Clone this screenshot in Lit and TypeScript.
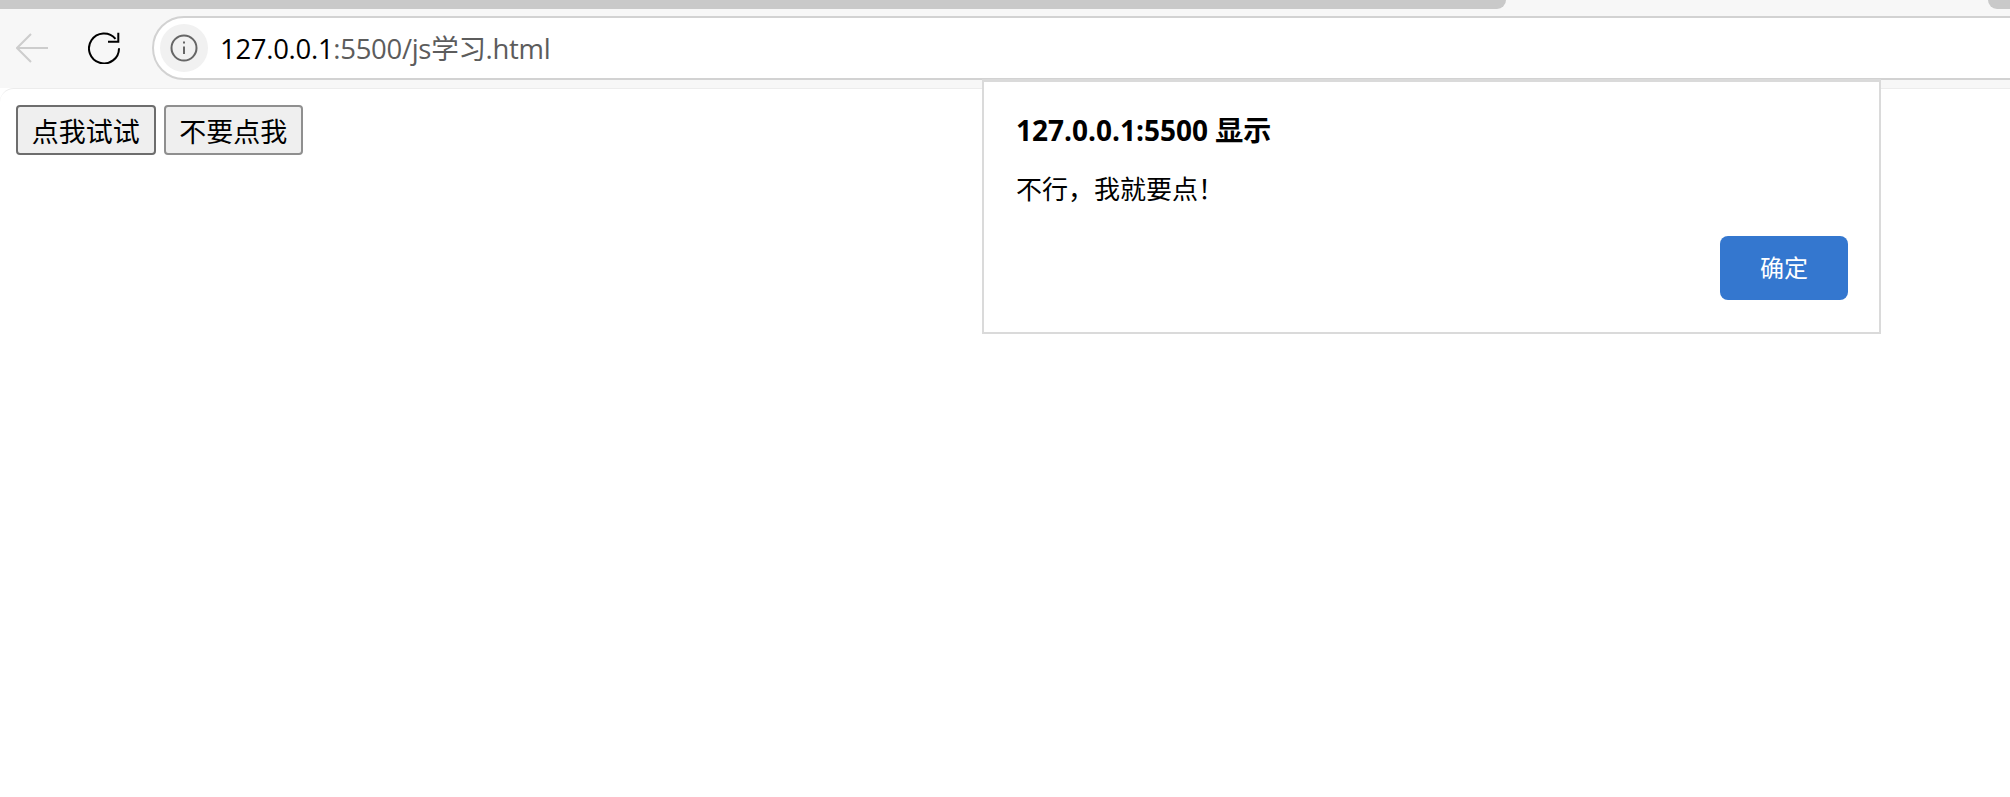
import { LitElement, html, css } from "lit";
import { customElement } from "lit/decorators.js";

@customElement("app-root")
export class AppRoot extends LitElement {
  static styles = css`
    :host {
      display: block;
      position: relative;
      height: 797px;
      overflow: hidden;
      background: #fff;
      font-family: "Open Sans", "Noto Sans CJK SC", sans-serif;
      color: #000;
    }
    .chrome {
      background: #f7f7f7;
      height: 88px;
      display: flex;
      flex-direction: column;
      overflow: hidden;
    }
    .tabs {
      height: 9px;
      flex: none;
      display: flex;
      justify-content: space-between;
    }
    .tab-a {
      width: 1506px;
      background: #c9c9c9;
      border-bottom-right-radius: 14px;
    }
    .tab-b {
      width: 22px;
      background: #c9c9c9;
      border-bottom-left-radius: 14px;
    }
    .toolbar {
      display: flex;
      align-items: flex-start;
      padding: 7px 0 0 16px;
    }
    .back {
      width: 32px;
      height: 32px;
      margin-top: 16px;
      display: block;
    }
    .reload {
      width: 32px;
      height: 32px;
      margin: 16px 0 0 40px;
      display: block;
    }
    .omnibox {
      flex: 1;
      height: 64px;
      box-sizing: border-box;
      margin: 0 -60px 0 32px;
      border: 2px solid #d2d2d2;
      border-radius: 32px;
      background: #fff;
      display: flex;
      align-items: center;
      padding-left: 6px;
    }
    .info {
      width: 48px;
      height: 48px;
      border-radius: 50%;
      background: #f1f1f1;
      display: flex;
      align-items: center;
      justify-content: center;
      flex: none;
    }
    .url {
      margin-left: 12px;
      font-size: 27.5px;
      letter-spacing: -0.3px;
      color: #5c5c5c;
      white-space: nowrap;
      position: relative;
      top: -1px;
    }
    .host {
      color: #000;
    }
    .content {
      background: #fff;
      border-top: 1px solid #ececec;
      border-top-left-radius: 14px;
      height: 709px;
      box-sizing: border-box;
      padding: 16px 16px;
      display: flex;
      gap: 8px;
      align-items: flex-start;
    }
    .btn {
      font-family: "Noto Sans CJK SC", sans-serif;
      font-size: 27px;
      line-height: 1;
      height: 50px;
      width: 139.5px;
      box-sizing: border-box;
      padding: 0;
      background: #efefef;
      border: 2px solid #8f8f8f;
      border-radius: 4px;
      color: #000;
    }
    .btn.focus {
      border-color: #6d6d6d;
    }
    .dialog {
      position: absolute;
      left: 982px;
      top: 79px;
      width: 899px;
      height: 255px;
      box-sizing: border-box;
      background: #fff;
      border: 2px solid #dadada;
      border-top-width: 3px;
      padding: 30px 31px 0 32px;
    }
    .title {
      font-size: 28px;
      line-height: 36px;
      font-weight: 700;
      white-space: nowrap;
    }
    .msg {
      font-size: 26px;
      line-height: 36px;
      margin-top: 22px;
      font-family: "Noto Sans CJK SC", sans-serif;
    }
    .actions {
      display: flex;
      justify-content: flex-end;
      margin-top: 30px;
    }
    .ok {
      width: 128px;
      height: 64px;
      background: #3477cf;
      color: #fff;
      border: none;
      border-radius: 8px;
      font-family: "Noto Sans CJK SC", sans-serif;
      font-size: 24px;
      padding: 0 0 3px;
    }
  `;

  render() {
    return html`
      <div class="chrome">
        <div class="tabs"><div class="tab-a"></div><div class="tab-b"></div></div>
        <div class="toolbar">
          <svg class="back" viewBox="0 0 32 32" fill="none" stroke="#cdcdcd" stroke-width="2">
            <path d="M0.5 16H32M15 2L1 16L15 30" />
          </svg>
          <svg class="reload" viewBox="0 0 32 32" fill="none" stroke="#000" stroke-width="2">
            <path d="M31 16.3A15 15 0 1 1 27.5 6.8" />
            <path d="M30.3 0.7V9.7H20" />
          </svg>
          <div class="omnibox">
            <div class="info">
              <svg width="28" height="28" viewBox="0 0 28 28" fill="none" stroke="#666" stroke-width="2">
                <circle cx="14" cy="14" r="12.5" />
                <path d="M14 12.5V20" />
                <path d="M14 7.5V9.5" />
              </svg>
            </div>
            <div class="url"><span class="host">127.0.0.1</span>:5500/js学习.html</div>
          </div>
        </div>
      </div>
      <div class="content">
        <button class="btn focus">点我试试</button>
        <button class="btn">不要点我</button>
      </div>
      <div class="dialog">
        <div class="title">127.0.0.1:5500 显示</div>
        <div class="msg">不行，我就要点！</div>
        <div class="actions"><button class="ok">确定</button></div>
      </div>
    `;
  }
}
